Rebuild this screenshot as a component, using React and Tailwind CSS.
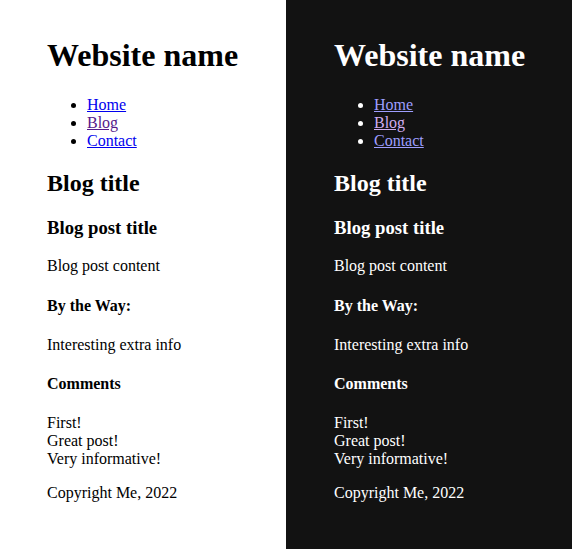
const Column = ({ dark }) => {
  const link = dark ? 'text-[#9e9eff]' : 'text-[#0000ee]';
  const visited = dark ? 'text-[#d0adf0]' : 'text-[#551a8b]';

  return (
    <div
      className={
        dark
          ? 'bg-[#121212] text-white pl-12 pr-4 py-4'
          : 'bg-white text-black pl-[47px] pr-4 py-4'
      }
    >
      <h1 className="text-[32px] font-bold my-[21.44px]">Website name</h1>
      <ul className="list-disc pl-10 my-4">
        <li>
          <a href="#" className={`${link} underline`}>Home</a>
        </li>
        <li>
          <a href="#" className={`${visited} underline`}>Blog</a>
        </li>
        <li>
          <a href="#" className={`${link} underline`}>Contact</a>
        </li>
      </ul>
      <h2 className="text-[24px] font-bold my-[19.92px]">Blog title</h2>
      <h3 className="text-[18.72px] font-bold my-[18.72px]">Blog post title</h3>
      <p className="my-4">Blog post content</p>
      <h4 className="font-bold my-[21.28px]">By the Way:</h4>
      <p className="my-4">Interesting extra info</p>
      <h4 className="font-bold my-[21.28px]">Comments</h4>
      <div>First!</div>
      <div>Great post!</div>
      <div>Very informative!</div>
      <p className="my-4">Copyright Me, 2022</p>
    </div>
  );
};

export default function App() {
  return (
    <div className="grid grid-cols-2 min-h-screen text-base leading-[normal] font-['Liberation_Serif','Times_New_Roman',serif]">
      <Column />
      <Column dark />
    </div>
  );
}
